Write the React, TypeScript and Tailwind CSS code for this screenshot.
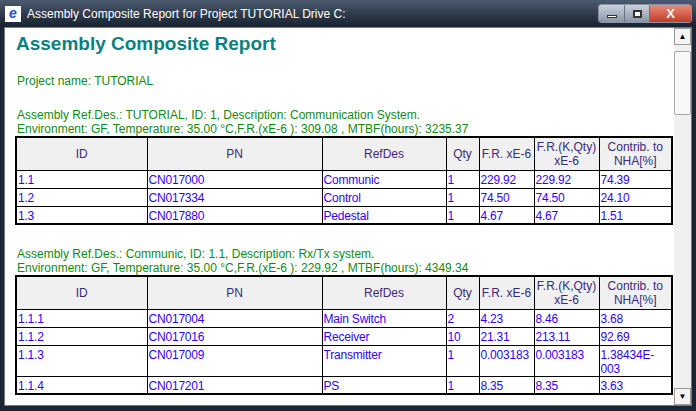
import React from "react";

const cols = [131, 175, 124, 33, 55, 65, 73];

function Tbl({ rows }: { rows: string[][] }) {
  return (
    <table className="table-fixed border-collapse border-2 border-black ml-[10px] w-[656px] text-[12px] leading-[14px]">
      <colgroup>
        {cols.map((w, i) => <col key={i} style={{ width: w }} />)}
      </colgroup>
      <thead>
        <tr className="bg-[#f0f0f0] text-[#3a2a7a] h-[33px]">
          {["ID", "PN", "RefDes", "Qty", "F.R. xE-6", "F.R.(K,Qty) xE-6", "Contrib. to NHA[%]"].map((h, i) => (
            <th key={i} className="border border-black font-normal text-center px-[1px] align-middle">{h}</th>
          ))}
        </tr>
      </thead>
      <tbody>
        {rows.map((r, i) => (
          <tr key={i} className="text-[#3300ff]">
            {r.map((c, j) => (
              <td key={j} className="border border-black px-[1px] align-top h-[18px] pt-[2px] break-words tracking-[-0.2px]">{c}</td>
            ))}
          </tr>
        ))}
      </tbody>
    </table>
  );
}

export default function App() {
  return (
    <div className="w-[696px] h-[411px] bg-[#1b2535] flex flex-col overflow-hidden" style={{ fontFamily: '"Liberation Sans", Arial, sans-serif' }}>
      <div className="h-[27px] flex items-center pl-[5px] pr-[4px] bg-gradient-to-b from-[#4d5b70] to-[#18222f] text-white text-[12px]">
        <div className="w-[16px] h-[16px] bg-white flex items-center justify-center text-[#1a4bd0] font-bold italic text-[14px] mr-[6px]">e</div>
        <span>Assembly Composite Report for Project TUTORIAL Drive C:</span>
        <div className="ml-auto flex h-[19px] border border-[#8a94a4] rounded-[3px] overflow-hidden">
          <div className="w-[25px] bg-gradient-to-b from-[#c9d1dd] to-[#8a96a8] flex items-center justify-center"><div className="w-[10px] h-[3px] border border-[#333] bg-white mt-[6px]" /></div>
          <div className="w-[25px] bg-gradient-to-b from-[#c9d1dd] to-[#8a96a8] border-l border-[#6a7484] flex items-center justify-center"><div className="w-[9px] h-[8px] border-[2px] border-[#333] bg-white" /></div>
          <div className="w-[42px] bg-gradient-to-b from-[#e88a7a] to-[#c03a22] border-l border-[#6a7484] flex items-center justify-center text-white font-bold text-[13px]">X</div>
        </div>
      </div>
      <div className="flex-1 flex ml-[4px] mr-[4px] mb-[5px] border border-[#777]">
        <div className="flex-1 bg-white overflow-hidden text-[12px] text-[#138a13]">
          <div className="pl-[11px] pt-[5px] text-[19px] font-bold text-[#0b8080] leading-[22px]">Assembly Composite Report</div>
          <div className="pl-[12px] mt-[19px] leading-[14px]">Project name: TUTORIAL</div>
          <div className="pl-[12px] mt-[20px] leading-[14px]">Assembly Ref.Des.: TUTORIAL, ID: 1, Description: Communication System.</div>
          <div className="pl-[12px] leading-[14px]">Environment: GF, Temperature: 35.00 °C,F.R.(xE-6 ): 309.08 , MTBF(hours): 3235.37</div>
          <Tbl rows={[
            ["1.1", "CN017000", "Communic", "1", "229.92", "229.92", "74.39"],
            ["1.2", "CN017334", "Control", "1", "74.50", "74.50", "24.10"],
            ["1.3", "CN017880", "Pedestal", "1", "4.67", "4.67", "1.51"],
          ]} />
          <div className="pl-[12px] mt-[22px] leading-[14px]">Assembly Ref.Des.: Communic, ID: 1.1, Description: Rx/Tx system.</div>
          <div className="pl-[12px] leading-[14px]">Environment: GF, Temperature: 35.00 °C,F.R.(xE-6 ): 229.92 , MTBF(hours): 4349.34</div>
          <Tbl rows={[
            ["1.1.1", "CN017004", "Main Switch", "2", "4.23", "8.46", "3.68"],
            ["1.1.2", "CN017016", "Receiver", "10", "21.31", "213.11", "92.69"],
            ["1.1.3", "CN017009", "Transmitter", "1", "0.003183", "0.003183", "1.38434E-003"],
            ["1.1.4", "CN017201", "PS", "1", "8.35", "8.35", "3.63"],
          ]} />
        </div>
        <div className="w-[17px] bg-[#f0f0f0] flex flex-col">
          <div className="h-[17px] border border-[#999] bg-[#f4f4f4] flex items-center justify-center text-[8px]">▲</div>
          <div className="h-[6px]" />
          <div className="h-[64px] border border-[#aaa] bg-[#f8f8f8] rounded-[2px]" />
          <div className="flex-1" />
          <div className="h-[17px] border border-[#999] bg-[#f4f4f4] flex items-center justify-center text-[8px]">▼</div>
        </div>
      </div>
    </div>
  );
}
